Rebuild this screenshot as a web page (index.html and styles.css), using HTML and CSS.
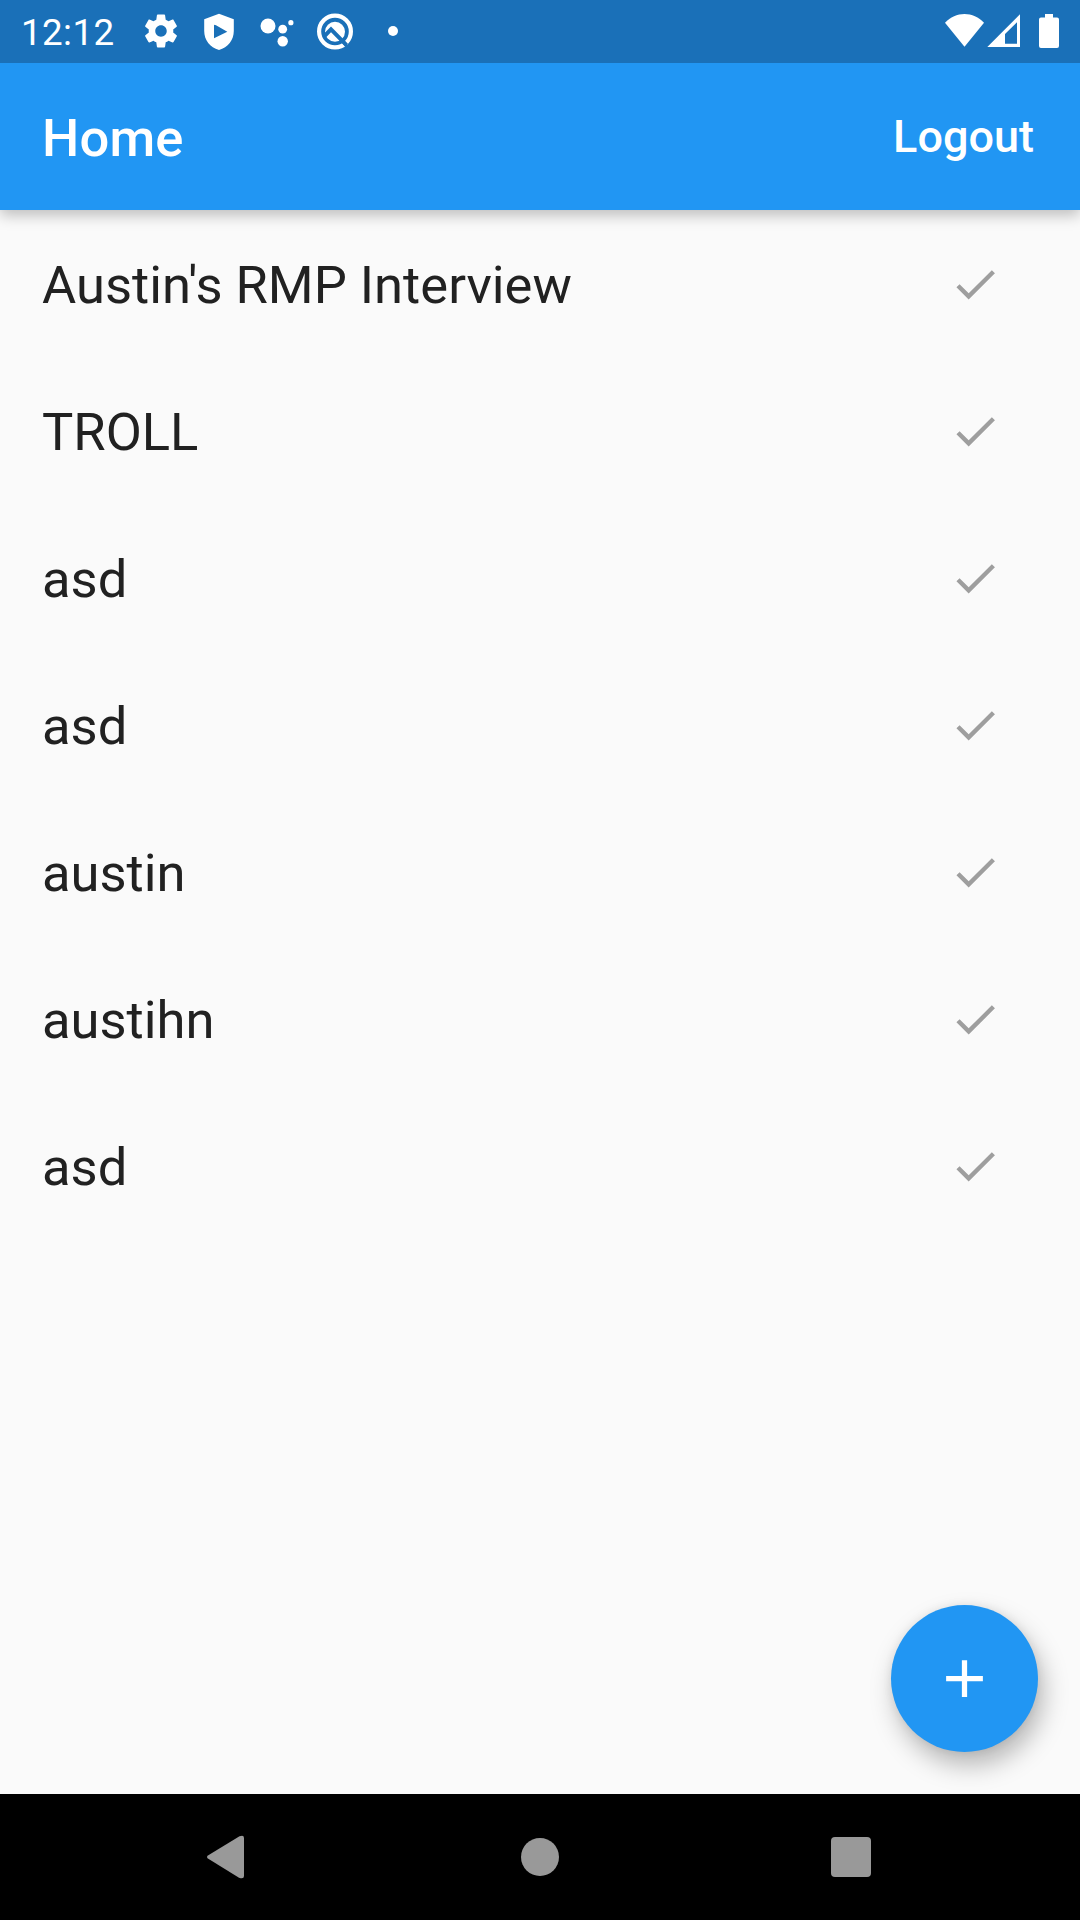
FILE: index.html
```html
<!DOCTYPE html>
<html lang="en">
<head>
<meta charset="utf-8">
<title>Home</title>
<link rel="stylesheet" href="styles.css">
</head>
<body>
<svg class="defs" aria-hidden="true">
  <symbol id="check" viewBox="0 0 24 24"><path d="M9 16.17L4.83 12l-1.42 1.41L9 19 21 7l-1.41-1.41z"/></symbol>
</svg>
<div class="screen">
  <header class="status-bar">
    <span class="clock">12:12</span>
    <div class="notifications">
      <svg viewBox="-17.2 -19.2 58.4 63.4" class="slot"><g transform="translate(12 12) scale(1.65) translate(-12 -12)"><path d="M19.43 12.98c.04-.32.07-.64.07-.98s-.03-.66-.07-.98l2.11-1.65c.19-.15.24-.42.12-.64l-2-3.46c-.12-.22-.39-.3-.61-.22l-2.49 1c-.52-.4-1.08-.73-1.69-.98l-.38-2.65C14.46 2.18 14.25 2 14 2h-4c-.25 0-.46.18-.49.42l-.38 2.65c-.61.25-1.17.59-1.69.98l-2.49-1c-.23-.09-.49 0-.61.22l-2 3.46c-.13.22-.07.49.12.64l2.11 1.65c-.04.32-.07.65-.07.98s.03.66.07.98l-2.11 1.65c-.19.15-.24.42-.12.64l2 3.46c.12.22.39.3.61.22l2.49-1c.52.4 1.08.73 1.69.98l.38 2.65c.03.24.24.42.49.42h4c.25 0 .46-.18.49-.42l.38-2.65c.61-.25 1.17-.59 1.69-.98l2.49 1c.23.09.49 0 .61-.22l2-3.46c.12-.22.07-.49-.12-.64l-2.11-1.65zM12 15.5c-1.93 0-3.5-1.57-3.5-3.5s1.57-3.5 3.5-3.5 3.500 1.570 3.500 3.500-1.570 3.500-3.500 3.500z"/></g></svg>
      <svg viewBox="190 0 58 63" class="slot"><path fill-rule="evenodd" d="M219 13.700L233.800 19.300V31C233.800 40 228 47.500 219 50C210 47.500 204.200 40 204.200 31V19.300ZM214 25.200V38.200L227.300 31.700L216 25.200Q214 24.500 214 25.200Z"/></svg>
      <svg viewBox="248 0 58 63" class="slot"><circle cx="268" cy="26" r="7.500"/><circle cx="282.700" cy="29.200" r="4.400"/><circle cx="290.900" cy="22.700" r="2.600"/><circle cx="282.700" cy="41.300" r="5.200"/></svg>
      <svg viewBox="306 0 58 63" class="slot"><circle class="ring" cx="335" cy="31.500" r="15.900"/><circle cx="335" cy="31.700" r="10"/><path class="cut" d="M324.500 36L331 29.300L346.500 45.200"/><path class="cut-thin" d="M343 41.500L349 49"/></svg>
      <svg viewBox="364 0 58 63" class="slot"><circle cx="393" cy="31" r="5"/></svg>
    </div>
    <svg viewBox="940 0 140 63" class="system">
      <path d="M964.500 46.700L945 22.800C955.500 11.200 973.500 11.200 984 22.800Z"/>
      <path fill-rule="evenodd" d="M1020 14.300V47H987.300ZM1017 22.300L1005 34V43.800H1017Z"/>
      <path d="M1045 14H1053V17.500H1057Q1059 17.500 1059 19.500V46Q1059 48 1057 48H1041Q1039 48 1039 46V19.500Q1039 17.500 1041 17.500H1045Z"/>
    </svg>
  </header>
  <div class="app-bar">
    <h1 class="title">Home</h1>
    <button class="logout">Logout</button>
  </div>
  <main class="content">
    <ul class="list">
      <li class="row"><span>Austin's RMP Interview</span><svg class="check"><use href="#check"/></svg></li>
      <li class="row"><span>TROLL</span><svg class="check"><use href="#check"/></svg></li>
      <li class="row"><span>asd</span><svg class="check"><use href="#check"/></svg></li>
      <li class="row"><span>asd</span><svg class="check"><use href="#check"/></svg></li>
      <li class="row"><span>austin</span><svg class="check"><use href="#check"/></svg></li>
      <li class="row"><span>austihn</span><svg class="check"><use href="#check"/></svg></li>
      <li class="row"><span>asd</span><svg class="check"><use href="#check"/></svg></li>
    </ul>
    <button class="fab" aria-label="Add"><svg viewBox="0 0 24 24"><path d="M19 13h-6v6h-2v-6H5v-2h6V5h2v6h6v2z"/></svg></button>
  </main>
  <nav class="nav-bar">
    <svg viewBox="0 0 42 44"><path d="M1.500 20.800Q0.500 22 1.500 23.200L33 42.700Q38 44.500 38 41V3Q38 -0.500 33.500 1.300Z"/></svg>
    <svg viewBox="0 0 42 44"><circle cx="21" cy="22" r="19"/></svg>
    <svg viewBox="0 0 42 44"><rect x="1" y="2" width="40" height="40" rx="4"/></svg>
  </nav>
</div>
</body>
</html>
```
FILE: styles.css
```css
* { box-sizing: border-box; }
body { margin: 0; font-family: Roboto, sans-serif; }
button { border: 0; padding: 0; font-family: inherit; color: #fff; }
.defs { display: none; }
.screen {
  width: 1080px;
  height: 1920px;
  display: flex;
  flex-direction: column;
  background: #fafafa;
  overflow: hidden;
}
.status-bar {
  height: 63px;
  flex: none;
  display: flex;
  background: #1a70b8;
  color: #fff;
  fill: #fff;
  z-index: 2;
}
.clock {
  width: 132px;
  padding-left: 21px;
  font-size: 36.75px;
  letter-spacing: .4px;
  line-height: 66px;
}
.notifications { display: flex; }
.slot { width: 58px; height: 63px; }
.ring { fill: none; stroke: #fff; stroke-width: 4.2; }
.cut, .cut-thin { fill: none; stroke: #1a70b8; stroke-width: 4; }
.cut-thin { stroke-width: 3; }
.system { width: 140px; height: 63px; margin-left: auto; }
.app-bar {
  height: 147px;
  flex: none;
  display: flex;
  align-items: center;
  justify-content: space-between;
  padding: 0 46px 0 42px;
  background: #2196f3;
  color: #fff;
  z-index: 1;
  box-shadow: 0 5px 14px rgba(0, 0, 0, .25);
}
.title { margin: 0; padding-top: 3px; font-size: 52.5px; font-weight: 500; line-height: 62px; letter-spacing: .2px; }
.logout { background: none; font-size: 45px; font-weight: 500; line-height: 54px; }
.content { flex: 1; position: relative; }
.list { list-style: none; margin: 0; padding: 0; }
.row {
  height: 147px;
  padding: 0 79px 0 42px;
  display: flex;
  align-items: center;
  justify-content: space-between;
  font-size: 52.5px;
  line-height: 62px;
  color: #212121;
}
.row span { padding-top: 3px; }
.check { width: 52.5px; height: 52.5px; margin-top: 1px; fill: #9e9e9e; }
.fab {
  position: absolute;
  right: 42px;
  bottom: 42px;
  width: 147px;
  height: 147px;
  border-radius: 50%;
  display: grid;
  place-items: center;
  background: #2196f3;
  box-shadow: 5px 13px 26px rgba(0, 0, 0, .28), 0 0 10px rgba(0, 0, 0, .07);
}
.fab svg { width: 63px; height: 63px; fill: #fff; }
.nav-bar {
  height: 126px;
  flex: none;
  display: flex;
  align-items: center;
  justify-content: space-between;
  padding: 0 208px;
  background: #000;
  fill: #999;
  z-index: 1;
}
.nav-bar svg { width: 42px; height: 44px; overflow: visible; }
.nav-bar svg:first-child { margin-left: -2px; margin-right: 2px; }
```
